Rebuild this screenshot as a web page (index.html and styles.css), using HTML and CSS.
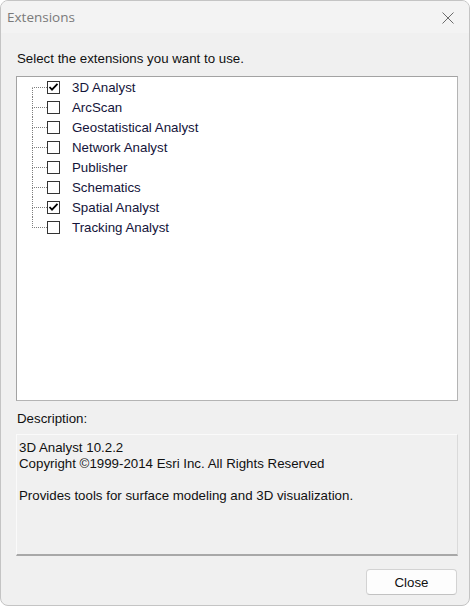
FILE: index.html
```html
<!DOCTYPE html>
<html>
<head>
<meta charset="utf-8">
<link rel="stylesheet" href="styles.css">
</head>
<body>
<div class="window">
  <div class="titlebar">
    <span class="title">Extensions</span>
    <svg class="close-x" width="12" height="12" viewBox="0 0 12 12"><path d="M0.5 0.5 L11.5 11.5 M11.5 0.5 L0.5 11.5" stroke="#6b6b6b" stroke-width="1" fill="none"/></svg>
  </div>
  <div class="content">
    <div class="label select-label">Select the extensions you want to use.</div>
    <div class="listbox">
      <ul class="tree">
        <li class="row first"><span class="branch"><span class="up"></span><span class="down"></span></span><span class="cb checked"><svg width="11" height="11" viewBox="0 0 11 11"><path d="M1.5 5 L4 7.6 L9.5 1.8" stroke="#000" stroke-width="1.8" fill="none"/></svg></span><span class="name">3D Analyst</span></li>
        <li class="row"><span class="branch"><span class="up"></span><span class="down"></span></span><span class="cb"></span><span class="name">ArcScan</span></li>
        <li class="row"><span class="branch"><span class="up"></span><span class="down"></span></span><span class="cb"></span><span class="name">Geostatistical Analyst</span></li>
        <li class="row"><span class="branch"><span class="up"></span><span class="down"></span></span><span class="cb"></span><span class="name">Network Analyst</span></li>
        <li class="row"><span class="branch"><span class="up"></span><span class="down"></span></span><span class="cb"></span><span class="name">Publisher</span></li>
        <li class="row"><span class="branch"><span class="up"></span><span class="down"></span></span><span class="cb"></span><span class="name">Schematics</span></li>
        <li class="row"><span class="branch"><span class="up"></span><span class="down"></span></span><span class="cb checked"><svg width="11" height="11" viewBox="0 0 11 11"><path d="M1.5 5 L4 7.6 L9.5 1.8" stroke="#000" stroke-width="1.8" fill="none"/></svg></span><span class="name">Spatial Analyst</span></li>
        <li class="row last"><span class="branch"><span class="up"></span><span class="down"></span></span><span class="cb"></span><span class="name">Tracking Analyst</span></li>
      </ul>
    </div>
    <div class="label desc-label">Description:</div>
    <div class="descbox">
      <div>3D Analyst 10.2.2</div>
      <div>Copyright ©1999-2014 Esri Inc. All Rights Reserved</div>
      <div class="blank">&nbsp;</div>
      <div>Provides tools for surface modeling and 3D visualization.</div>
    </div>
    <div class="buttons">
      <button class="btn">Close</button>
    </div>
  </div>
</div>
</body>
</html>
```
FILE: styles.css
```css
html, body {
  margin: 0;
  padding: 0;
  background: #ffffff;
}
.window {
  box-sizing: border-box;
  width: 470px;
  height: 606px;
  border: 1px solid #c4c4c4;
  border-radius: 8px;
  background: #f0f0f0;
  overflow: hidden;
  display: flex;
  flex-direction: column;
  font-family: "Liberation Sans", Arial, sans-serif;
  font-size: 13.3px;
  color: #111;
}
.titlebar {
  height: 32px;
  background: #f3f3f3;
  display: flex;
  align-items: center;
  justify-content: space-between;
  padding: 0 15px 0 6px;
  flex: none;
}
.title {
  font-family: "Open Sans", "Noto Sans", sans-serif;
  font-size: 13.5px;
  color: #7a7a7a;
}
.close-x {
  display: block;
  margin-top: 1px;
}
.content {
  padding: 0 11px 0 15px;
  display: flex;
  flex-direction: column;
}
.label {
  line-height: 16px;
  height: 16px;
  padding-left: 1px;
}
.select-label {
  margin-top: 18px;
}
.listbox {
  margin-top: 9px;
  height: 325px;
  box-sizing: border-box;
  background: #ffffff;
  border: 1px solid #a3a3a3;
  border-right-color: #b4b4b4;
  border-bottom-color: #b4b4b4;
  padding-top: 0;
}
.tree {
  list-style: none;
  margin: 0;
  padding: 0 0 0 15px;
}
.row {
  height: 20px;
  display: flex;
  align-items: center;
}
.branch {
  width: 15px;
  height: 20px;
  display: flex;
  flex-direction: column;
  flex: none;
}
.up {
  box-sizing: border-box;
  height: 11px;
  border-left: 1px dotted #808080;
  border-bottom: 1px dotted #808080;
}
.down {
  box-sizing: border-box;
  height: 9px;
  border-left: 1px dotted #808080;
}
.first .up {
  border-left-color: transparent;
}
.last .down {
  border-left-color: transparent;
}
.cb {
  box-sizing: border-box;
  width: 13px;
  height: 13px;
  border: 1px solid #333333;
  background: #ffffff;
  display: flex;
  align-items: center;
  justify-content: center;
  flex: none;
  margin-top: 0;
}
.cb svg {
  display: block;
}
.name {
  margin-left: 12px;
  color: #14143a;
  white-space: nowrap;
}
.desc-label {
  margin-top: 10px;
}
.descbox {
  margin-top: 7px;
  height: 122px;
  box-sizing: border-box;
  border: 1px solid #fafafa;
  border-right-color: #dadada;
  border-bottom: 2px solid #a8a8a8;
  padding: 5px 2px 0 2px;
  line-height: 16px;
  color: #111;
}
.buttons {
  display: flex;
  justify-content: flex-end;
  margin-top: 13px;
}
.btn {
  width: 91px;
  height: 26px;
  box-sizing: border-box;
  border: 1px solid #d3d3d3;
  border-bottom-color: #c2c2c2;
  border-radius: 4px;
  background: #fdfdfd;
  font-family: "Liberation Sans", Arial, sans-serif;
  font-size: 13.3px;
  color: #111;
  padding: 0;
  margin-right: 1px;
}
```
